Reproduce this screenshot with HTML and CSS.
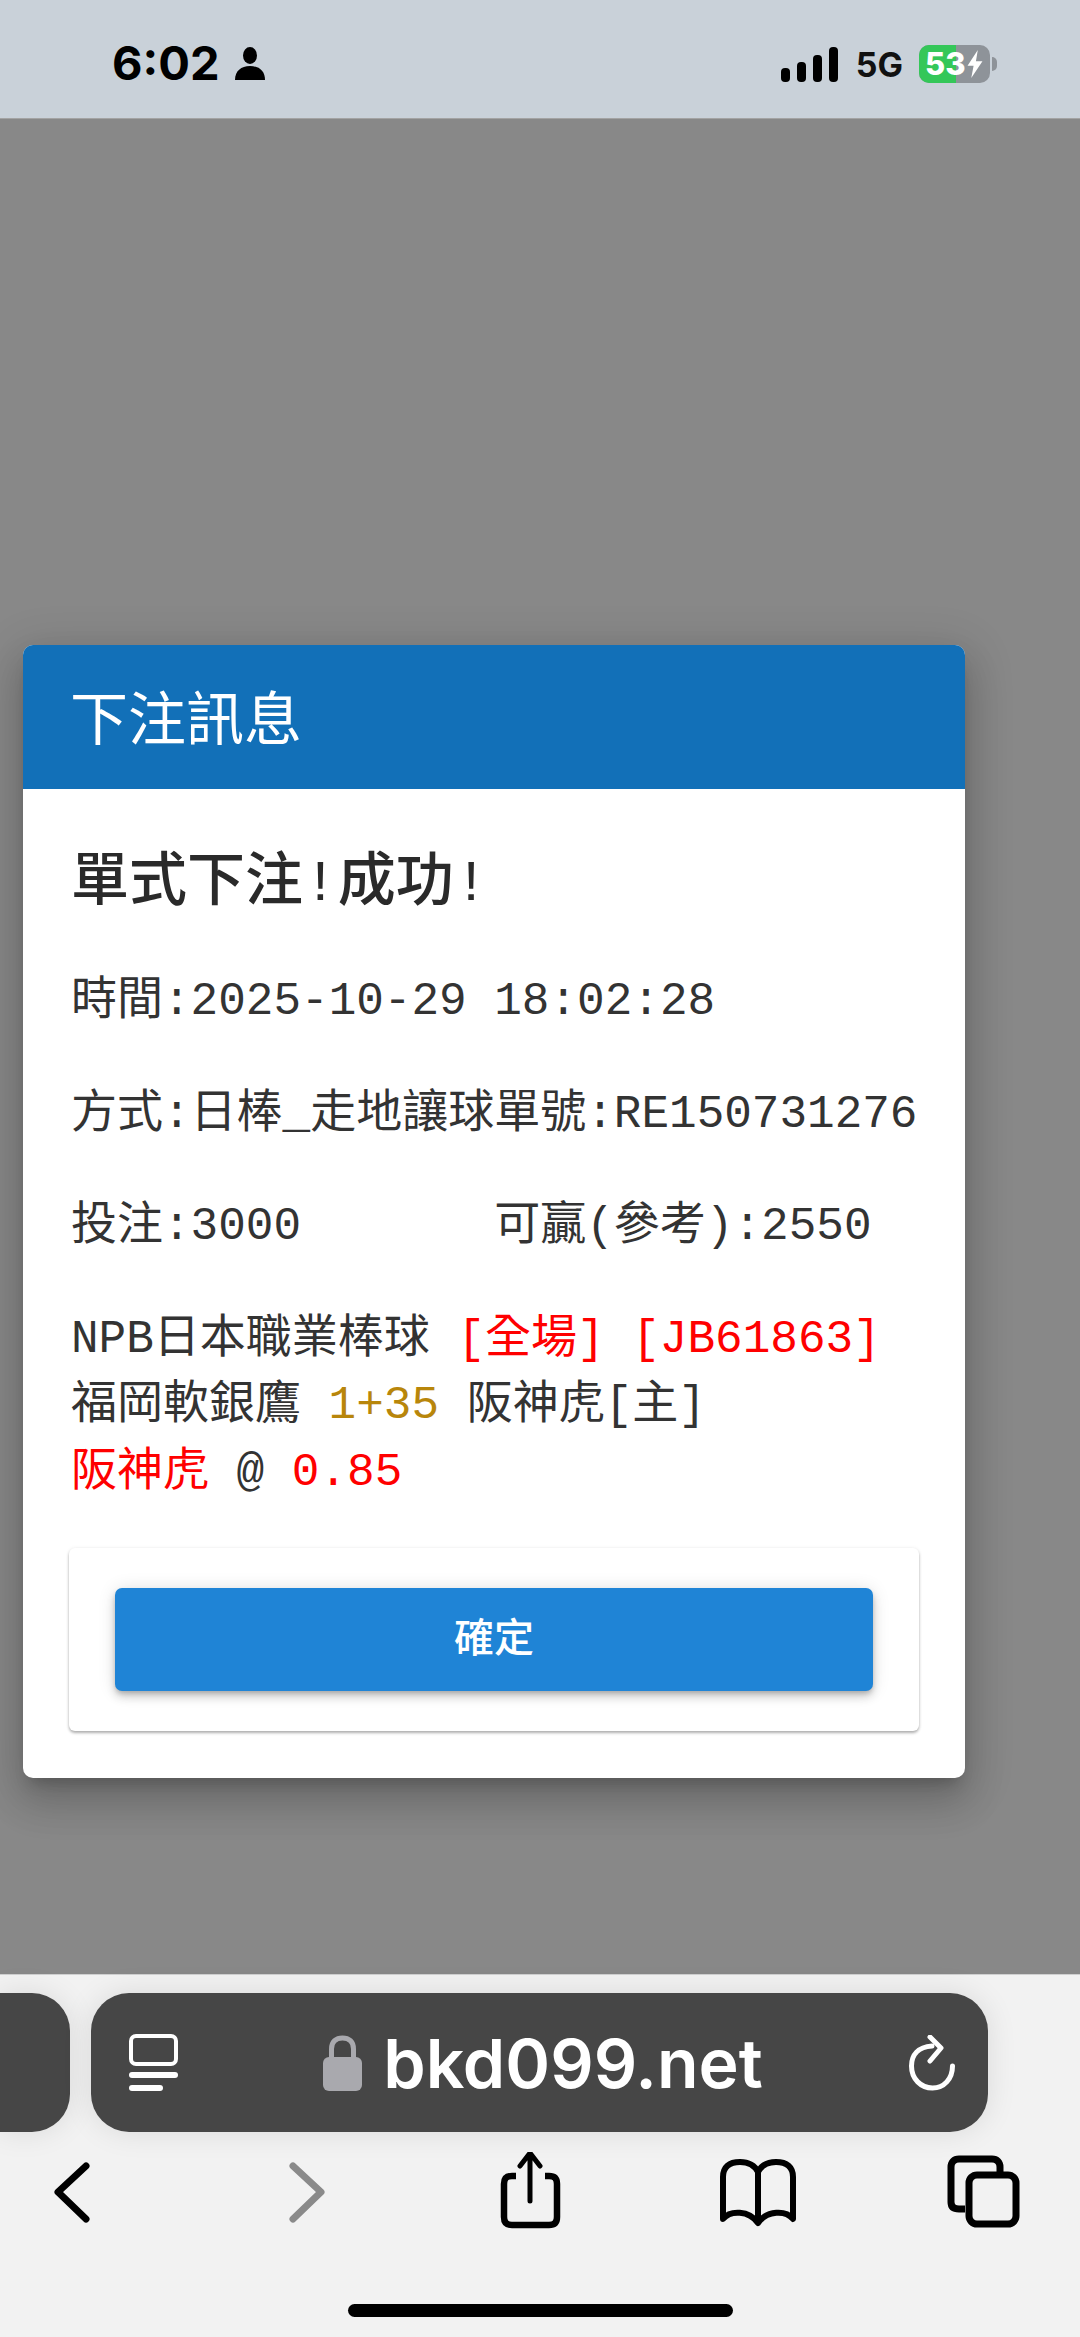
FILE: index.html
```html
<!DOCTYPE html>
<html lang="zh-Hant">
<head>
    <meta charset="UTF-8">
    <meta name="viewport" content="width=device-width, initial-scale=1.0">
    <title>下注訊息</title>
    <link rel="stylesheet" href="styles.css">
</head>
<body>
    <!-- Status bar -->
    <div class="status-bar">
        <div class="status-left">
            <span class="clock">6:02</span>
            <svg class="person" viewBox="0 0 30 33" width="30" height="33">
                <ellipse cx="15" cy="8.5" rx="7" ry="8.5" fill="#000"/>
                <path d="M0 33 C0 24 6 19 15 19 C24 19 30 24 30 33 Z" fill="#000"/>
            </svg>
        </div>
        <div class="status-right">
            <div class="signal">
                <span class="bar bar-1"></span>
                <span class="bar bar-2"></span>
                <span class="bar bar-3"></span>
                <span class="bar bar-4"></span>
            </div>
            <span class="network">5G</span>
            <div class="battery">
                <div class="battery-fill"></div>
                <span class="battery-level">53</span>
                <svg class="bolt" viewBox="0 0 16 30" width="16" height="28">
                    <path d="M11 0 L0 17 H6.5 L4 30 L16 12 H9 Z" fill="#fff"/>
                </svg>
            </div>
            <span class="battery-cap"></span>
        </div>
    </div>

    <!-- Dialog over the dimmed page -->
    <div class="scrim">
        <div class="dialog">
            <div class="dialog-title">下注訊息</div>
            <div class="dialog-content">
                <h2>單式下注!成功!</h2>
                <p>時間:2025-10-29 18:02:28</p>
                <p>方式:日棒_走地讓球單號:RE150731276</p>
                <p>投注:3000&nbsp;&nbsp;&nbsp;&nbsp;&nbsp;&nbsp;&nbsp;可贏(參考):2550</p>
                <p>NPB日本職業棒球 <span class="red">[全場]</span> <span class="red">[JB61863]</span><br>福岡軟銀鷹 <span class="gold">1+35</span> 阪神虎[主]<br><span class="red">阪神虎</span> @ <span class="red">0.85</span></p>
            </div>
            <div class="dialog-actions">
                <button class="confirm" type="button">確定</button>
            </div>
        </div>
    </div>

    <!-- Browser bar -->
    <div class="browser-bar">
        <div class="address-row">
            <div class="tab-stub"></div>
            <div class="address-pill">
                <svg viewBox="0 0 49 57" width="49" height="57">
                    <rect x="2" y="2" width="45" height="28" rx="5" fill="none" stroke="#fff" stroke-width="4"/>
                    <rect x="0" y="38" width="49" height="6" rx="3" fill="#fff"/>
                    <rect x="0" y="51" width="34" height="6" rx="3" fill="#fff"/>
                </svg>
                <div class="site">
                    <svg viewBox="0 0 39 56" width="39" height="56">
                        <path d="M8.5 24 V14 C8.5 6.5 13 3 19.5 3 C26 3 30.5 6.5 30.5 14 V24" fill="none" stroke="#a9a9ae" stroke-width="5"/>
                        <rect x="0" y="22" width="39" height="34" rx="6" fill="#a9a9ae"/>
                    </svg>
                    <span class="url">bkd099.net</span>
                </div>
                <svg viewBox="0 0 49 56" width="49" height="56">
                    <path d="M44.5 31 C44.5 44 36 53 24.5 53 C13 53 3.5 44 3.5 31 C3.5 20 10 12 24 11" fill="none" stroke="#fff" stroke-width="5" stroke-linecap="round"/>
                    <path d="M22 2 L33 13 L22 26" fill="none" stroke="#fff" stroke-width="5" stroke-linecap="round" stroke-linejoin="round"/>
                </svg>
            </div>
        </div>
        <div class="toolbar">
            <svg viewBox="0 0 100 80" width="100" height="80">
                <path d="M64 14 L36 40 L64 67" fill="none" stroke="#000" stroke-width="7" stroke-linecap="round" stroke-linejoin="round"/>
            </svg>
            <svg viewBox="0 0 100 80" width="100" height="80">
                <path d="M43 14 L71 40 L43 67" fill="none" stroke="#8a8a8a" stroke-width="7" stroke-linecap="round" stroke-linejoin="round"/>
            </svg>
            <svg viewBox="0 0 100 80" width="100" height="80">
                <path d="M38 24 H34 C28 24 26 27 26 32 V65 C26 71 29 73 34 73 H71 C76 73 79 71 79 65 V32 C79 27 77 24 71 24 H67" fill="none" stroke="#000" stroke-width="6.5"/>
                <path d="M52 49 V2 M42 14 L52 1 L62 14" fill="none" stroke="#000" stroke-width="5" stroke-linecap="round" stroke-linejoin="round"/>
            </svg>
            <svg viewBox="0 0 100 80" width="100" height="80">
                <path d="M52 20 C48 12 41 10 34 10 C23 10 17 15 17 25 V67 C24 58 43 58 52 71 C61 58 80 58 87 67 V25 C87 15 81 10 70 10 C63 10 56 12 52 20 Z M52 20 V71" fill="none" stroke="#000" stroke-width="6" stroke-linejoin="round"/>
            </svg>
            <svg viewBox="0 0 100 80" width="100" height="80">
                <path d="M31 57 H25 C19 57 17 54 17 50 V15 C17 10 20 7 25 7 H58 C63 7 66 10 66 15 V22" fill="none" stroke="#000" stroke-width="7"/>
                <rect x="35" y="23" width="47" height="49" rx="8" fill="none" stroke="#000" stroke-width="7"/>
            </svg>
        </div>
        <div class="home-indicator"></div>
    </div>
</body>
</html>
```

FILE: styles.css
```css
* {
    box-sizing: border-box;
}
body {
    margin: 0;
    height: 2337px;
    width: 1080px;
    overflow: hidden;
    display: flex;
    flex-direction: column;
    background-color: #f2f2f2;
    font-family: "Liberation Mono", "Noto Sans CJK TC", monospace;
    color: #333;
}

/* status bar */
.status-bar {
    height: 118px;
    flex: none;
    background-color: #c9d1d9;
    display: flex;
    justify-content: space-between;
    align-items: flex-start;
    padding: 45px 83px 0 112px;
}
.status-left {
    display: flex;
    align-items: center;
    gap: 15px;
    height: 36px;
}
.clock {
    font-family: Inter, "Liberation Sans", sans-serif;
    font-weight: 700;
    font-size: 47px;
    line-height: 36px;
    color: #000;
}
.status-right {
    display: flex;
    align-items: center;
    height: 38px;
}
.signal {
    display: flex;
    align-items: flex-end;
    gap: 7px;
    height: 36px;
}
.bar {
    width: 9px;
    background-color: #000;
    border-radius: 4px;
}
.bar-1 { height: 14px; }
.bar-2 { height: 20px; }
.bar-3 { height: 27px; }
.bar-4 { height: 35px; }
.network {
    font-family: Inter, "Liberation Sans", sans-serif;
    font-size: 34px;
    font-weight: 700;
    color: #111;
    margin: 0 16px 0 18px;
}
.battery {
    position: relative;
    width: 71px;
    height: 38px;
    border-radius: 10px;
    background-color: #8e9399;
    display: flex;
    align-items: center;
    padding-left: 6px;
}
.battery-fill {
    position: absolute;
    left: 0;
    top: 0;
    bottom: 0;
    width: 37px;
    background-color: #34c759;
    border-radius: 10px 0 0 10px;
}
.battery-level {
    position: relative;
    font-family: Inter, "Liberation Sans", sans-serif;
    font-weight: 800;
    font-size: 31px;
    line-height: 38px;
    color: #fff;
}
.bolt {
    position: relative;
    flex: none;
    margin-left: 1px;
}
.battery-cap {
    width: 5px;
    height: 14px;
    margin-left: 2px;
    background-color: #8e9399;
    border-radius: 0 5px 5px 0;
}

/* dimmed page */
.scrim {
    flex: 1;
    background-color: #888888;
    border-top: 1px solid #a3a3a3;
    padding: 526px 0 0 23px;
}
.dialog {
    width: 942px;
    height: 1133px;
    background-color: #fff;
    border-radius: 10px;
    box-shadow: 0 11px 15px -7px rgba(0, 0, 0, 0.2), 0 24px 38px 3px rgba(0, 0, 0, 0.14), 0 9px 46px 8px rgba(0, 0, 0, 0.12);
}
.dialog-title {
    height: 144px;
    background-color: #1270b8;
    border-radius: 10px 10px 0 0;
    color: #fff;
    font-family: "Noto Sans CJK TC", sans-serif;
    font-weight: 400;
    font-size: 58px;
    line-height: 140px;
    padding-left: 47px;
}
.dialog-content {
    height: 759px;
    padding: 63px 0 0 48px;
}
.dialog-content h2 {
    margin: 0 0 51px;
    font-size: 58px;
    line-height: 66px;
    font-weight: 500;
    color: #2a2a2a;
    white-space: nowrap;
}
.dialog-content p {
    margin: 0 0 46px;
    font-size: 46px;
    line-height: 66.5px;
    white-space: nowrap;
}
.red {
    color: #ff0000;
}
.gold {
    color: #b8860b;
}
.dialog-actions {
    margin: 0 46px;
    height: 183px;
    padding: 40px 46px;
    background-color: #fff;
    border-radius: 6px;
    box-shadow: 0 2px 3px rgba(0, 0, 0, 0.3), 0 0 4px rgba(0, 0, 0, 0.06);
}
.confirm {
    display: block;
    width: 100%;
    height: 103px;
    border: none;
    border-radius: 7px;
    padding: 0 0 9px;
    background-color: #1f84d6;
    color: #fff;
    font-family: "Noto Sans CJK TC", sans-serif;
    font-size: 40px;
    font-weight: 500;
    box-shadow: 0 3px 5px -1px rgba(0, 0, 0, 0.2), 0 6px 10px rgba(0, 0, 0, 0.14), 0 1px 18px rgba(0, 0, 0, 0.12);
}

/* browser bar */
.browser-bar {
    height: 363px;
    flex: none;
    border-top: 1px solid #cfcfcf;
    padding-top: 18px;
    background-color: #f2f2f2;
}
.address-row {
    display: flex;
    gap: 21px;
    height: 139px;
}
.tab-stub {
    width: 70px;
    background-color: #464646;
    border-radius: 0 38px 38px 0;
    box-shadow: 0 0 30px rgba(0, 0, 0, 0.1);
}
.address-pill {
    width: 897px;
    background-color: #464646;
    border-radius: 38px;
    box-shadow: 0 0 30px rgba(0, 0, 0, 0.1);
    display: flex;
    justify-content: space-between;
    align-items: center;
    padding: 0 31px 0 38px;
}
.site {
    display: flex;
    align-items: center;
    gap: 21px;
}
.url {
    font-family: Inter, "Liberation Sans", sans-serif;
    font-size: 68px;
    font-weight: 600;
    color: #fff;
    line-height: 60px;
}
.toolbar {
    display: flex;
    justify-content: space-between;
    padding: 20px 46px 0 22px;
}
.home-indicator {
    width: 385px;
    height: 13px;
    margin: 72px 0 0 348px;
    background-color: #000;
    border-radius: 7px;
}
```
